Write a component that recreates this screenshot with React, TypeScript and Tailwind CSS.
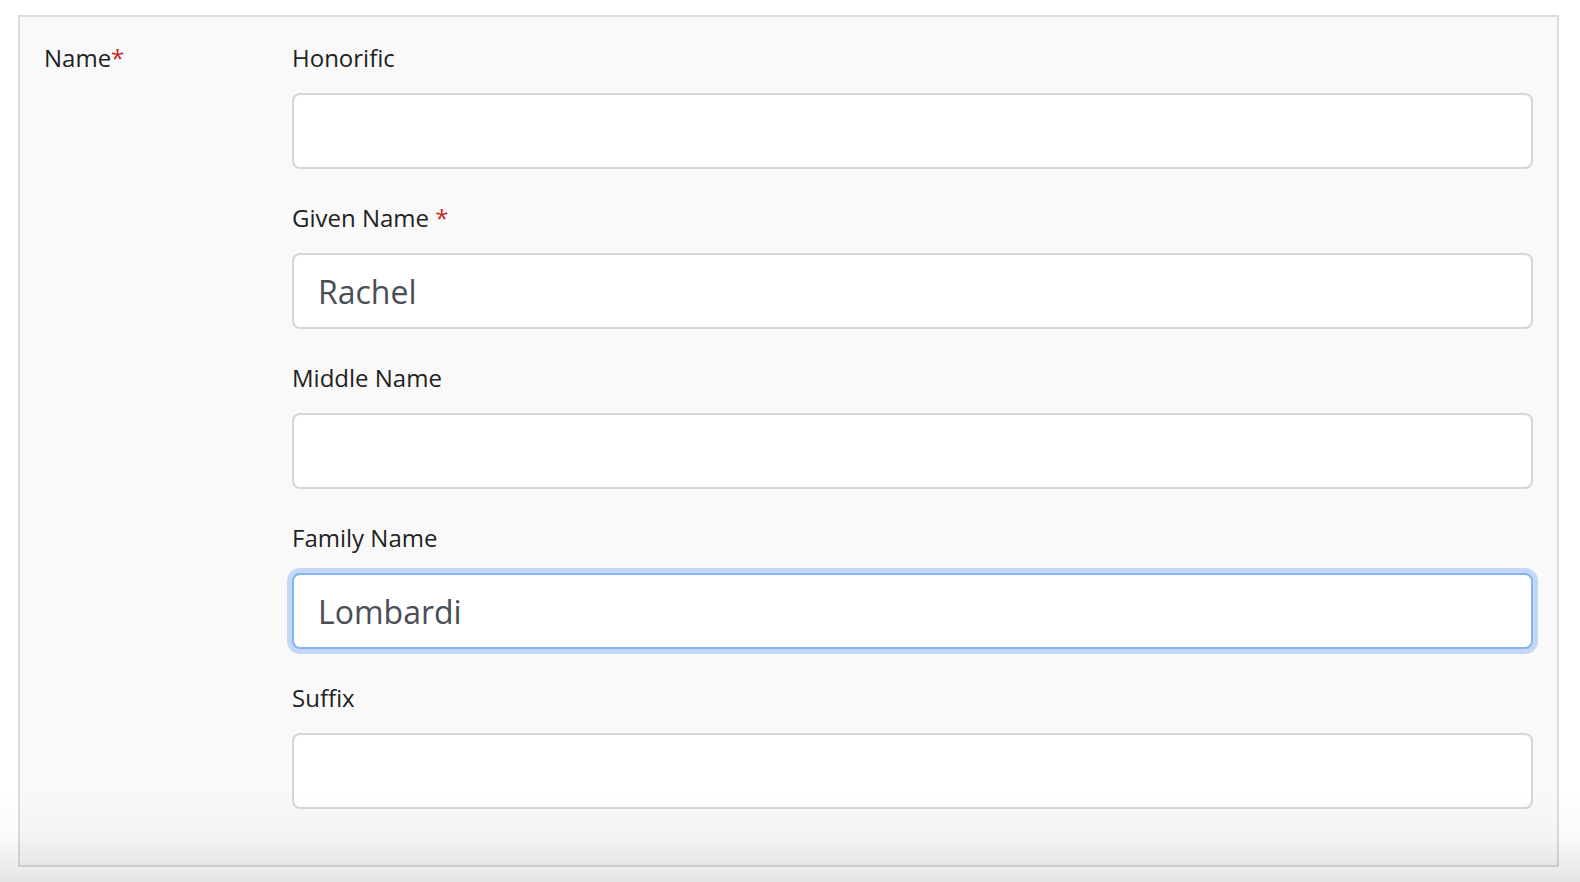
import React from "react";

const fields: { label: string; required?: boolean; value?: string; focused?: boolean }[] = [
  { label: "Honorific" },
  { label: "Given Name", required: true, value: "Rachel" },
  { label: "Middle Name" },
  { label: "Family Name", value: "Lombardi", focused: true },
  { label: "Suffix" },
];

export default function App() {
  return (
    <div
      className="relative w-[1580px] h-[882px] overflow-hidden bg-white"
      style={{ fontFamily: '"Open Sans", "Noto Sans", Arial, sans-serif' }}
    >
      <div className="mt-[15px] ml-[18px] w-[1541px] h-[852px] border-2 border-[#dcdcdc] bg-[#f9f9f9] flex px-6 pt-6">
        <div className="w-[248px] shrink-0 text-[24px] leading-[34px] text-[#222222]">
          Name<span className="text-[#c4281c]">*</span>
        </div>
        <div className="flex-1 flex flex-col">
          {fields.map((f) => (
            <div key={f.label} className="flex flex-col mb-[32px]">
              <label className="text-[24px] leading-[34px] text-[#222222]">
                {f.label}
                {f.required && <span className="text-[#c4281c]"> *</span>}
              </label>
              <div className="mt-[18px] h-[76px]">
                <input
                  readOnly
                  value={f.value ?? ""}
                  className={
                    f.focused
                      ? "w-full h-[76px] rounded-[8px] bg-white border-2 border-[#85b3f3] ring-[5px] ring-[#c4d8f6] outline-none px-[24px] text-[32px] text-[#4a4e57]"
                      : "w-full h-[76px] rounded-[8px] bg-white border-2 border-[#d3d6db] outline-none px-[24px] text-[32px] text-[#4a4e57]"
                  }
                  style={{ fontFamily: '"Open Sans", "Noto Sans", Arial, sans-serif' }}
                />
              </div>
            </div>
          ))}
        </div>
      </div>
      <div className="pointer-events-none absolute left-0 right-0 bottom-0 h-[95px] bg-gradient-to-b from-transparent via-black/[0.02] to-black/[0.1]" />
    </div>
  );
}
